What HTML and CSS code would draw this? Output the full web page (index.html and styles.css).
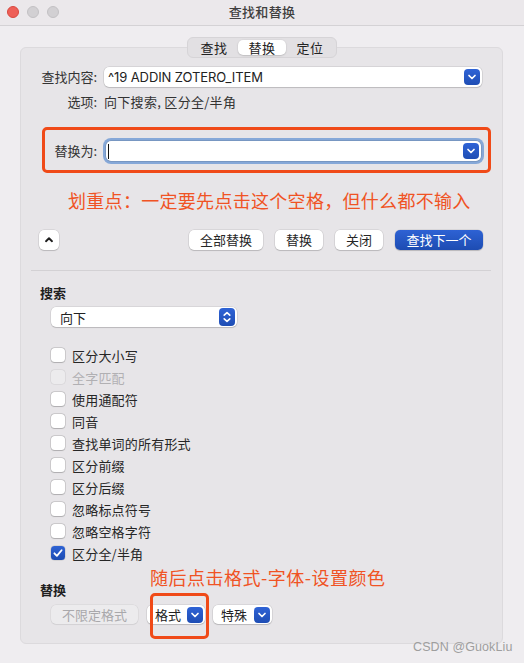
FILE: index.html
```html
<!DOCTYPE html>
<html lang="zh">
<head>
<meta charset="utf-8">
<title>查找和替换</title>
<link rel="stylesheet" href="styles.css">
</head>
<body>
<div class="window">
  <div class="titlebar">
    <div class="lights"><span class="light red"></span><span class="light"></span><span class="light"></span></div>
    <div class="title">查找和替换</div>
    <div></div>
  </div>
  <div class="body">
    <div class="tabs-row">
      <div class="tabs">
        <span class="tab">查找</span><span class="tab active">替换</span><span class="tab">定位</span>
      </div>
    </div>
    <div class="panel">
      <div class="field-row">
        <span class="field-label">查找内容:</span>
        <div class="combo">
          <span class="combo-text">^19 ADDIN ZOTERO_ITEM</span>
          <span class="popup-btn"><svg width="16" height="16" viewBox="0 0 16 16"><path d="M5 6.5 L8 9.5 L11 6.5" fill="none" stroke="#fff" stroke-width="1.7" stroke-linecap="round" stroke-linejoin="round"/></svg></span>
        </div>
      </div>
      <div class="field-row options">
        <span class="field-label">选项:</span>
        <span class="options-text">向下搜索, 区分全/半角</span>
      </div>
      <div class="highlight-box">
        <span class="field-label short">替换为:</span>
        <div class="combo focused">
          <span class="caret"></span>
          <span class="popup-btn"><svg width="16" height="16" viewBox="0 0 16 16"><path d="M5 6.5 L8 9.5 L11 6.5" fill="none" stroke="#fff" stroke-width="1.7" stroke-linecap="round" stroke-linejoin="round"/></svg></span>
        </div>
      </div>
      <div class="note note-1">划重点：一定要先点击这个空格，但什么都不输入</div>
      <div class="action-row">
        <button class="btn icon-btn"><svg width="20" height="20" viewBox="0 0 20 20"><path d="M7 11.2 L10 8.3 L13 11.2" fill="none" stroke="#1e1e1e" stroke-width="1.9" stroke-linecap="round" stroke-linejoin="round"/></svg></button>
        <div class="spacer"></div>
        <button class="btn">全部替换</button>
        <button class="btn">替换</button>
        <button class="btn">关闭</button>
        <button class="btn primary">查找下一个</button>
      </div>
      <div class="sep"></div>
      <div class="section-title">搜索</div>
      <div class="select">
        <span class="select-text">向下</span>
        <span class="stepper"><svg width="16" height="18" viewBox="0 0 16 18"><path d="M5.2 7.2 L8 4.6 L10.8 7.2 M5.2 10.8 L8 13.4 L10.8 10.8" fill="none" stroke="#fff" stroke-width="1.6" stroke-linecap="round" stroke-linejoin="round"/></svg></span>
      </div>
      <ul class="checks">
        <li class="check-row"><span class="box"></span><span>区分大小写</span></li>
        <li class="check-row disabled"><span class="box"></span><span>全字匹配</span></li>
        <li class="check-row"><span class="box"></span><span>使用通配符</span></li>
        <li class="check-row"><span class="box"></span><span>同音</span></li>
        <li class="check-row"><span class="box"></span><span>查找单词的所有形式</span></li>
        <li class="check-row"><span class="box"></span><span>区分前缀</span></li>
        <li class="check-row"><span class="box"></span><span>区分后缀</span></li>
        <li class="check-row"><span class="box"></span><span>忽略标点符号</span></li>
        <li class="check-row"><span class="box"></span><span>忽略空格字符</span></li>
        <li class="check-row checked"><span class="box"><svg width="14" height="14" viewBox="0 0 14 14"><path d="M3.4 7.3 L5.9 9.9 L10.6 4.2" fill="none" stroke="#fff" stroke-width="1.8" stroke-linecap="round" stroke-linejoin="round"/></svg></span><span>区分全/半角</span></li>
      </ul>
      <div class="section-title replace-title">替换</div>
      <div class="bottom-row">
        <button class="btn small disabled-btn">不限定格式</button>
        <div class="popup">
          <span class="popup-text">格式</span>
          <span class="popup-btn"><svg width="16" height="16" viewBox="0 0 16 16"><path d="M5 6.5 L8 9.5 L11 6.5" fill="none" stroke="#fff" stroke-width="1.7" stroke-linecap="round" stroke-linejoin="round"/></svg></span>
        </div>
        <div class="popup">
          <span class="popup-text">特殊</span>
          <span class="popup-btn"><svg width="16" height="16" viewBox="0 0 16 16"><path d="M5 6.5 L8 9.5 L11 6.5" fill="none" stroke="#fff" stroke-width="1.7" stroke-linecap="round" stroke-linejoin="round"/></svg></span>
        </div>
      </div>
      <div class="note note-2">随后点击格式-字体-设置颜色</div>
      <div class="mark-box"></div>
    </div>
  </div>
  <div class="watermark">CSDN @GuokLiu</div>
</div>
</body>
</html>
```

FILE: styles.css
```css
* { box-sizing: border-box; }
html, body { margin: 0; padding: 0; }
body {
  width: 524px;
  height: 663px;
  overflow: hidden;
  font-family: Inter, "Noto Sans CJK SC", sans-serif;
  font-size: 13px;
  color: #262626;
  background: #efedf0;
}
.window {
  position: relative;
  width: 524px;
  height: 663px;
  background: #efedf0;
}
.titlebar {
  height: 26px;
  display: grid;
  grid-template-columns: 1fr auto 1fr;
  align-items: center;
  background: #ebe8eb;
  border-bottom: 1px solid #d4d2d5;
}
.lights {
  display: flex;
  gap: 8px;
  padding-left: 7px;
  padding-bottom: 2px;
}
.light {
  width: 12px;
  height: 12px;
  border-radius: 50%;
  background: #d2d0d3;
  border: 0.5px solid #c3c1c4;
}
.light.red {
  background: #ee5f57;
  border-color: #d8483f;
}
.title {
  font-family: "Noto Sans CJK SC", sans-serif;
  font-size: 13px;
  font-weight: 500;
  color: #3f3f3f;
  letter-spacing: 0.3px;
  padding-bottom: 2px;
}
.body {
  padding: 11px 21px 0 20px;
}
.tabs-row {
  display: flex;
  justify-content: center;
  position: relative;
  z-index: 1;
  margin-bottom: -11px;
  padding-left: 1px;
}
.tabs {
  display: flex;
  height: 21px;
  padding: 2px;
  background: #e2e0e3;
  border: 1px solid #d6d4d7;
  border-radius: 6px;
}
.tab {
  width: 48px;
  display: flex;
  align-items: center;
  justify-content: center;
  font-family: "Noto Sans CJK SC", sans-serif;
  font-size: 13px;
  letter-spacing: 0.4px;
  color: #222;
  border-radius: 5px;
  line-height: 1;
}
.tab.active {
  background: #fff;
  box-shadow: 0 0.5px 1.5px rgba(0,0,0,0.25);
}
.panel {
  position: relative;
  height: 597px;
  background: #e7e5e8;
  border: 1px solid #dcdadd;
  border-radius: 6px;
  padding: 19px 19px 19px 18px;
}
.field-row {
  display: flex;
  align-items: center;
  gap: 7px;
  margin-right: 1px;
}
.field-label {
  width: 58px;
  flex: none;
  text-align: right;
  font-family: "Noto Sans CJK SC", sans-serif;
  color: #333;
  line-height: 16px;
}
.options {
  margin-top: 7px;
}
.options-text {
  font-family: "Noto Sans CJK SC", sans-serif;
  color: #333;
  line-height: 16px;
  letter-spacing: 0.3px;
}
.combo {
  flex: 1;
  height: 20px;
  display: flex;
  align-items: center;
  justify-content: space-between;
  background: #fff;
  border-radius: 5px;
  box-shadow: 0 0 0 0.5px rgba(0,0,0,0.14), 0 1px 1px rgba(0,0,0,0.12);
  padding: 0 2px 0 4px;
}
.combo-text {
  color: #222;
  font-size: 13px;
  letter-spacing: -0.1px;
}
.popup-btn {
  width: 16px;
  height: 16px;
  flex: none;
  border-radius: 4px;
  background: linear-gradient(#2f63d6, #1e4db4);
  display: flex;
}
.highlight-box {
  margin: 17px -8px 0 3px;
  height: 46px;
  border: 3px solid #f04a18;
  border-radius: 5px;
  padding: 11px 7px 9px 8px;
  display: flex;
  align-items: center;
  gap: 9px;
}
.field-label.short {
  width: 44px;
}
.combo.focused {
  box-shadow: 0 0 0 0.5px rgba(0,0,0,0.2), 0 0 0 3px #86a8d8;
}
.caret {
  width: 1px;
  height: 15px;
  background: #111;
  margin-left: -2px;
}
.note {
  font-family: "Noto Sans CJK SC", sans-serif;
  font-size: 18px;
  line-height: 22px;
  color: #f05324;
  white-space: nowrap;
}
.note-1 {
  margin-top: 16px;
  padding-left: 29px;
  letter-spacing: 0.3px;
}
.action-row {
  margin-top: 19px;
  display: flex;
  align-items: center;
  gap: 12px;
}
.spacer { flex: 1; }
.btn {
  height: 20px;
  padding: 0 11px;
  border: none;
  border-radius: 5px;
  background: #fff;
  box-shadow: 0 0 0 0.5px rgba(0,0,0,0.13), 0 1px 1px rgba(0,0,0,0.14);
  font-family: "Noto Sans CJK SC", sans-serif;
  font-size: 13px;
  color: #262626;
  line-height: 20px;
  display: flex;
  align-items: center;
  justify-content: center;
}
.icon-btn {
  width: 20px;
  padding: 0;
}
.btn.primary {
  width: 88px;
  padding: 0;
  color: #fff;
  background: linear-gradient(#2e62d4, #1d4cb2);
}
.sep {
  height: 1px;
  background: #d3d1d4;
  margin: 20px -8px 0 -8px;
}
.section-title {
  margin-top: 14px;
  margin-left: 1px;
  font-family: "Noto Sans CJK SC", sans-serif;
  font-weight: 700;
  font-size: 13px;
  line-height: 16px;
  color: #1f1f1f;
}
.select {
  margin: 6px 0 0 12px;
  width: 186px;
  height: 20px;
  display: flex;
  align-items: center;
  justify-content: space-between;
  background: #fff;
  border-radius: 5px;
  box-shadow: 0 0 0 0.5px rgba(0,0,0,0.13), 0 1px 1px rgba(0,0,0,0.14);
  padding: 0 2px 0 9px;
}
.select-text {
  font-family: "Noto Sans CJK SC", sans-serif;
  color: #222;
}
.stepper {
  width: 16px;
  height: 18px;
  border-radius: 4px;
  background: linear-gradient(#2f63d6, #1e4db4);
  display: flex;
}
.checks {
  list-style: none;
  margin: 17px 0 0 12px;
  padding: 0;
}
.check-row {
  height: 22px;
  display: flex;
  align-items: center;
  gap: 7px;
  font-family: "Noto Sans CJK SC", sans-serif;
  color: #262626;
  letter-spacing: 0.2px;
}
.box {
  width: 14px;
  height: 14px;
  border-radius: 3.5px;
  background: #fff;
  box-shadow: 0 0 0 0.5px rgba(0,0,0,0.22), 0 0.5px 1px rgba(0,0,0,0.15);
  display: flex;
}
.check-row.disabled {
  color: #b1b0b3;
}
.check-row.disabled .box {
  background: #ecebed;
  box-shadow: 0 0 0 0.5px rgba(0,0,0,0.1);
}
.check-row.checked .box {
  background: linear-gradient(#2e62d4, #1d4cb2);
  box-shadow: 0 0 0 0.5px rgba(0,0,0,0.15);
}
.replace-title {
  margin-top: 18px;
}
.bottom-row {
  margin: 7px 0 0 12px;
  display: flex;
  align-items: center;
}
.btn.small {
  height: 19px;
}
.disabled-btn {
  width: 87px;
  padding: 0;
  background: #ecebed;
  color: #a9a8ab;
  box-shadow: 0 0 0 0.5px rgba(0,0,0,0.08), 0 1px 1px rgba(0,0,0,0.05);
}
.popup {
  margin-left: 9px;
  width: 58px;
  height: 19px;
  display: flex;
  align-items: center;
  justify-content: space-between;
  background: #fff;
  border-radius: 5px;
  box-shadow: 0 0 0 0.5px rgba(0,0,0,0.13), 0 1px 1px rgba(0,0,0,0.14);
  padding: 0 2px 0 8px;
}
.popup + .popup {
  margin-left: 8px;
  width: 59px;
}
.popup-text {
  font-family: "Noto Sans CJK SC", sans-serif;
  color: #222;
}
.note-2 {
  position: absolute;
  left: 129px;
  top: 518px;
  letter-spacing: 0.5px;
}
.mark-box {
  position: absolute;
  left: 129px;
  top: 545px;
  width: 59px;
  height: 46px;
  border: 3px solid #f04a18;
  border-radius: 5px;
}
.watermark {
  position: absolute;
  left: 413px;
  top: 640px;
  font-family: "Liberation Sans", sans-serif;
  font-size: 12.5px;
  color: #9e9e9e;
  letter-spacing: 0.1px;
}
```
